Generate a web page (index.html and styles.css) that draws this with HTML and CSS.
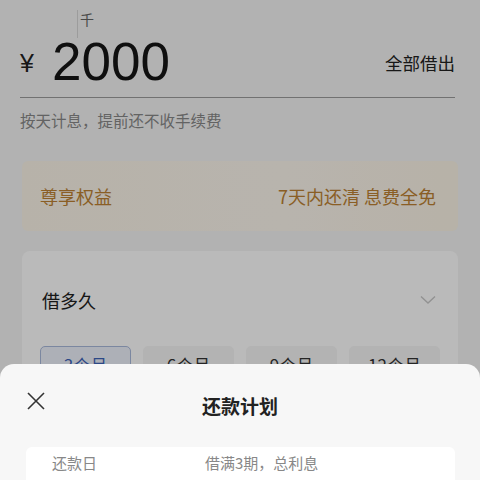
FILE: index.html
```html
<!DOCTYPE html>
<html lang="zh-CN">
<head>
<meta charset="utf-8">
<link rel="stylesheet" href="styles.css">
</head>
<body>
<div class="page">
  <div class="amount">
    <div class="unit-hint"><span class="tick"></span><span class="unit">千</span></div>
    <div class="amount-row">
      <span class="yen">¥</span>
      <span class="value">2000</span>
      <span class="all">全部借出</span>
    </div>
    <div class="amount-note">按天计息，提前还不收手续费</div>
  </div>

  <div class="perk">
    <span>尊享权益</span>
    <span>7天内还清 息费全免</span>
  </div>

  <div class="term-card">
    <div class="term-head">
      <span>借多久</span>
      <svg class="chev" width="16" height="10" viewBox="0 0 16 10"><path d="M1 1.5 L8 8 L15 1.5" fill="none" stroke="#c8c8c8" stroke-width="1.4"/></svg>
    </div>
    <div class="terms">
      <div class="term active">3个月</div>
      <div class="term">6个月</div>
      <div class="term">9个月</div>
      <div class="term">12个月</div>
    </div>
  </div>
</div>

<div class="mask"></div>

<div class="sheet">
  <div class="sheet-head">
    <svg class="close" width="20" height="20" viewBox="0 0 20 20"><path d="M2 2 L18 18 M18 2 L2 18" stroke="#333" stroke-width="1.6" fill="none"/></svg>
    <div class="sheet-title">还款计划</div>
  </div>
  <div class="plan">
    <div class="plan-row">
      <span class="col-a">还款日</span>
      <span class="col-b">借满3期，总利息</span>
    </div>
  </div>
</div>
</body>
</html>
```

FILE: styles.css
```css
* { box-sizing: border-box; }
html, body { margin: 0; padding: 0; }
body {
  width: 480px;
  height: 480px;
  overflow: hidden;
  position: relative;
  background: #f4f4f4;
  font-family: "Noto Sans CJK SC", "Liberation Sans", sans-serif;
  color: #222;
}
.page { padding: 0; }

.amount { padding: 0 25px 0 20px; }
.unit-hint {
  position: relative;
  height: 38px;
  padding-left: 60px;
  padding-top: 6px;
}
.tick {
  position: absolute;
  left: 57px;
  top: 10px;
  width: 1px;
  height: 28px;
  background: #d6d6d6;
}
.unit {
  font-size: 14px;
  color: #666;
  line-height: 20px;
}
.amount-row {
  display: flex;
  align-items: center;
  height: 48px;
  border-bottom: 1.5px solid #9c9c9c;
  box-sizing: content-box;
  padding-bottom: 11px;
}
.yen {
  font-family: "Liberation Sans", sans-serif;
  font-size: 25px;
  width: 32px;
  color: #222;
  padding-top: 2px;
}
.value {
  font-family: "Liberation Sans", sans-serif;
  font-size: 53px;
  line-height: 48px;
  color: #151515;
  flex: 1;
}
.all {
  font-size: 17.5px;
  color: #222;
}
.amount-note {
  margin-top: 11px;
  font-size: 15.5px;
  color: #888;
  line-height: 22px;
}

.perk {
  margin: 30px 22px 0 22px;
  height: 70px;
  background: linear-gradient(90deg, #fbf5e8, #fcf7ee 60%, #fbf4e6);
  border-radius: 6px;
  display: flex;
  align-items: center;
  justify-content: space-between;
  padding: 0 22px 0 18px;
  font-size: 18px;
  color: #bd8233;
}

.term-card {
  margin: 20px 22px 0 22px;
  background: #fff;
  border-radius: 8px;
  padding: 36px 18px 20px 18px;
  height: 200px;
}
.term-head {
  display: flex;
  justify-content: space-between;
  align-items: center;
  font-size: 18px;
  color: #222;
  padding-left: 2px;
}
.chev { margin-right: 4px; }
.terms {
  margin-top: 33px;
  display: grid;
  grid-template-columns: repeat(4, 1fr);
  gap: 12px;
}
.term {
  height: 44px;
  border-radius: 5px;
  background: #f6f6f6;
  border: 1px solid #f6f6f6;
  font-size: 17px;
  line-height: 24px;
  color: #333;
  display: flex;
  align-items: flex-start;
  justify-content: center;
  padding-top: 6px;
}
.term.active {
  background: #eef2fb;
  border-color: #a9b9dc;
  color: #3d63b8;
}

.mask {
  position: absolute;
  inset: 0;
  background: rgba(0, 0, 0, 0.27);
}

.sheet {
  position: absolute;
  left: 0;
  right: 0;
  top: 364px;
  bottom: 0;
  background: #f7f7f7;
  border-radius: 14px 14px 0 0;
  overflow: hidden;
}
.sheet-head {
  position: relative;
  height: 83px;
  display: flex;
  justify-content: center;
  padding-top: 28px;
}
.close {
  position: absolute;
  left: 26px;
  top: 27px;
}
.sheet-title {
  font-size: 19px;
  font-weight: bold;
  color: #222;
  line-height: 28px;
}
.plan {
  margin: 0 25px 0 26px;
  background: #fff;
  border-radius: 6px 6px 0 0;
  height: 60px;
  padding: 5px 0 0 26px;
}
.plan-row {
  display: flex;
  font-size: 15px;
  color: #888;
  line-height: 22px;
}
.col-a { width: 153px; }
```
